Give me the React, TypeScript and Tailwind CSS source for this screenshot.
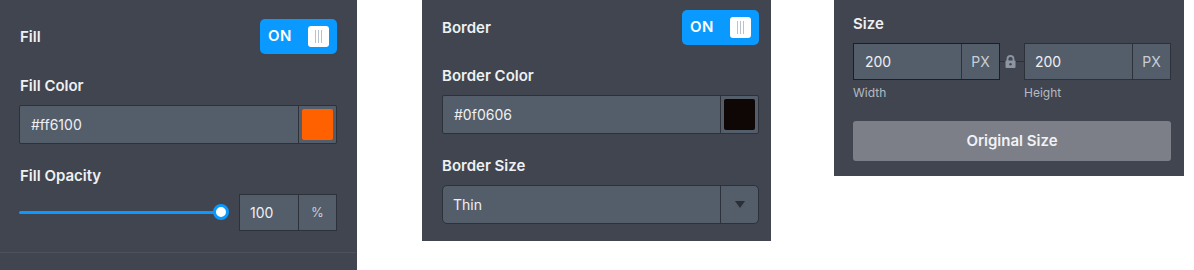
import React from 'react';

const font = { fontFamily: 'Inter, Lato, "Open Sans", sans-serif' };

const Toggle = () => (
  <div className="flex h-[35px] w-[77px] items-center justify-between rounded-[5px] bg-[#0a99ff] pl-[8px] pr-[8px]">
    <span className="text-[15px] font-semibold tracking-wide text-white">ON</span>
    <span className="flex h-[21px] w-[21px] items-center justify-center gap-[2px] rounded-[3px] bg-white">
      <span className="h-[13px] w-px bg-[#b9c1cc]" />
      <span className="h-[13px] w-px bg-[#b9c1cc]" />
      <span className="h-[13px] w-px bg-[#b9c1cc]" />
    </span>
  </div>
);

const Label = ({ children }: { children: React.ReactNode }) => (
  <p className="text-[15px] font-semibold leading-none text-[#eef0f3]">{children}</p>
);

const ColorInput = ({ value, swatch }: { value: string; swatch: string }) => (
  <div className="flex h-[39px] w-full rounded-[2px] border border-[#2d3139] bg-[#545d6a]">
    <div className="flex flex-1 items-center pl-[11px] text-[14px] text-[#eef0f3]">{value}</div>
    <div className="flex w-[38px] items-center justify-center border-l border-[#2d3139]">
      <span className="h-[31px] w-[31px] rounded-[2px]" style={{ backgroundColor: swatch }} />
    </div>
  </div>
);

const LockIcon = () => (
  <svg width="11" height="13" viewBox="0 0 11 13">
    <path d="M2.5 6V4a3 3 0 0 1 6 0v2" fill="none" stroke="#8d95a2" strokeWidth="1.8" />
    <rect x="0.5" y="5.5" width="10" height="7.5" rx="1" fill="#8d95a2" />
    <circle cx="5.5" cy="9.2" r="1.2" fill="#40454f" />
  </svg>
);

export default function App() {
  return (
    <div className="flex h-[270px] w-[1194px] items-start bg-white" style={font}>
      {/* fill panel */}
      <div className="flex h-[270px] w-[357px] flex-col bg-[#40454f] pl-[19px] pr-[20px] pt-[19px]">
        <div className="flex items-center justify-between">
          <span className="pl-px"><Label>Fill</Label></span>
          <Toggle />
        </div>
        <div className="mt-[24px] pl-px"><Label>Fill Color</Label></div>
        <div className="mt-[12px]"><ColorInput value="#ff6100" swatch="#ff6100" /></div>
        <div className="mt-[24px] pl-px"><Label>Fill Opacity</Label></div>
        <div className="mt-[11px] flex items-center">
          <div className="relative flex h-[37px] w-[220px] items-center">
            <div className="h-[3px] w-[202px] rounded-full bg-[#0a99ff]" />
            <div className="absolute left-[194px] top-[10px] h-[16px] w-[16px] rounded-full border-[3px] border-[#0a99ff] bg-white" />
          </div>
          <div className="flex h-[37px] w-[98px] border border-[#2d3139] bg-[#545d6a] text-[14px] text-[#eef0f3]">
            <div className="flex flex-1 items-center pl-[10px]">100</div>
            <div className="flex w-[38px] items-center justify-center border-l border-[#2d3139] text-[13px] text-[#c9ced6]">%</div>
          </div>
        </div>
        <div className="-mx-[19px] mt-[21px] h-px bg-[#4d525d]" />
      </div>

      {/* border panel */}
      <div className="ml-[65px] flex h-[241px] w-[349px] flex-col bg-[#40454f] pl-[20px] pr-[12px] pt-[10px]">
        <div className="flex items-center justify-between">
          <Label>Border</Label>
          <Toggle />
        </div>
        <div className="mt-[23px]"><Label>Border Color</Label></div>
        <div className="mt-[12px]"><ColorInput value="#0f0606" swatch="#0f0606" /></div>
        <div className="mt-[24px]"><Label>Border Size</Label></div>
        <div className="mt-[12px] flex h-[39px] w-full rounded-[5px] border border-[#2d3139] bg-[#545d6a]">
          <div className="flex flex-1 items-center pl-[10px] text-[14px] text-[#eef0f3]">Thin</div>
          <div className="flex w-[38px] items-center justify-center border-l border-[#2d3139]">
            <svg width="10" height="7" viewBox="0 0 10 7"><path d="M0 0h10L5 7z" fill="#2b2f37" /></svg>
          </div>
        </div>
      </div>

      {/* size panel */}
      <div className="ml-[63px] flex h-[176px] w-[350px] flex-col bg-[#40454f] pl-[19px] pr-[13px] pt-[16px]">
        <Label>Size</Label>
        <div className="mt-[12px] flex items-start">
          <div className="flex flex-col">
            <div className="flex h-[37px] w-[147px] border border-[#1c1f25] bg-[#545d6a] text-[14px] text-[#eef0f3]">
              <div className="flex flex-1 items-center pl-[11px]">200</div>
              <div className="flex w-[38px] items-center justify-center border-l border-[#2d3139] text-[14px] text-[#c9ced6]">PX</div>
            </div>
            <span className="mt-[7px] text-[12px] leading-none text-[#b4bac4]">Width</span>
          </div>
          <div className="flex h-[37px] w-[24px] items-center">
            <span className="h-px w-[5px] bg-[#2d3139]" />
            <LockIcon />
            <span className="h-px w-[8px] bg-[#2d3139]" />
          </div>
          <div className="flex flex-col">
            <div className="flex h-[37px] w-[147px] border border-[#2d3139] bg-[#545d6a] text-[14px] text-[#eef0f3]">
              <div className="flex flex-1 items-center pl-[10px]">200</div>
              <div className="flex w-[38px] items-center justify-center border-l border-[#2d3139] text-[14px] text-[#c9ced6]">PX</div>
            </div>
            <span className="mt-[7px] text-[12px] leading-none text-[#b4bac4]">Height</span>
          </div>
        </div>
        <button className="mt-[22px] flex h-[40px] w-full items-center justify-center rounded-[3px] bg-[#7c7f87] text-[15px] font-semibold text-[#f1f2f4]">
          Original Size
        </button>
      </div>
    </div>
  );
}
